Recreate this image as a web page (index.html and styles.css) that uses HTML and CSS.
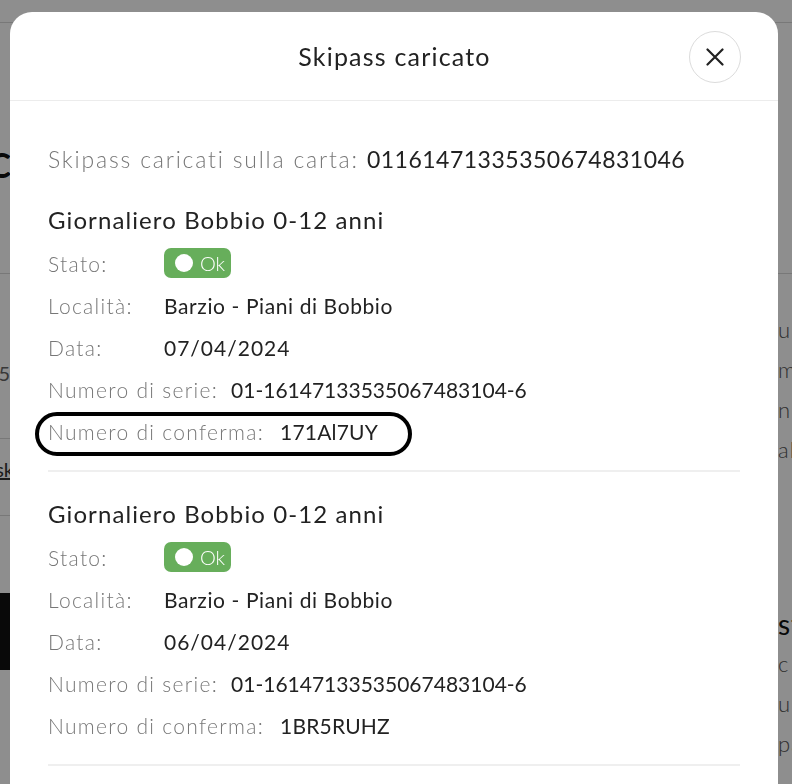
FILE: index.html
```html
<!DOCTYPE html>
<html lang="it">
<head>
<meta charset="utf-8">
<title>Skipass caricato</title>
<link rel="stylesheet" href="styles.css">
</head>
<body>
<div class="page">
  <div class="page-top"></div>
  <div class="band band-1">
    <div class="edge-left"><span class="big">Carta C</span></div>
    <div class="mid"></div>
    <div class="edge-right"></div>
  </div>
  <div class="band band-2">
    <div class="edge-left col">
      <div class="lt num"><span>12345</span></div>
      <div class="lt line-under"></div>
      <div class="lt link"><span>Disk</span></div>
      <div class="lt line-under2"></div>
      <div class="block"></div>
    </div>
    <div class="mid"></div>
    <div class="edge-right col">
      <div class="rt">u</div>
      <div class="rt">m</div>
      <div class="rt">n</div>
      <div class="rt">al</div>
      <div class="rt strong">st</div>
      <div class="rt">c</div>
      <div class="rt">u</div>
      <div class="rt">pa</div>
    </div>
  </div>
</div>

<div class="overlay">
  <div class="modal">
    <div class="modal-header">
      <span></span>
      <h1 class="modal-title">Skipass caricato</h1>
      <button class="close" aria-label="Chiudi">
        <svg width="18" height="18" viewBox="0 0 18 18"><path d="M1.5 1.5 L16.5 16.5 M16.5 1.5 L1.5 16.5" stroke="#222" stroke-width="2.2" stroke-linecap="round" fill="none"/></svg>
      </button>
    </div>
    <div class="modal-body">
      <p class="intro">Skipass caricati sulla carta: <span class="card-no">01161471335350674831046</span></p>

      <section class="pass">
        <h2 class="pass-title">Giornaliero Bobbio 0-12 anni</h2>
        <div class="rows">
          <div class="row"><span class="label">Stato:</span><span class="badge"><span class="dot"></span>Ok</span></div>
          <div class="row"><span class="label">Località:</span><span class="value">Barzio - Piani di Bobbio</span></div>
          <div class="row"><span class="label">Data:</span><span class="value date">07/04/2024</span></div>
          <div class="row"><span class="label">Numero di serie:</span><span class="value serial">01-16147133535067483104-6</span></div>
          <div class="row highlight"><span class="label">Numero di conferma:</span><span class="value code">171Al7UY</span><span class="ring"></span></div>
        </div>
      </section>

      <section class="pass">
        <h2 class="pass-title">Giornaliero Bobbio 0-12 anni</h2>
        <div class="rows">
          <div class="row"><span class="label">Stato:</span><span class="badge"><span class="dot"></span>Ok</span></div>
          <div class="row"><span class="label">Località:</span><span class="value">Barzio - Piani di Bobbio</span></div>
          <div class="row"><span class="label">Data:</span><span class="value date">06/04/2024</span></div>
          <div class="row"><span class="label">Numero di serie:</span><span class="value serial">01-16147133535067483104-6</span></div>
          <div class="row"><span class="label">Numero di conferma:</span><span class="value code">1BR5RUHZ</span></div>
        </div>
      </section>
    </div>
  </div>
</div>
</body>
</html>
```

FILE: styles.css
```css
* { box-sizing: border-box; }

html, body {
  margin: 0;
  height: 784px;
  overflow: hidden;
}

body {
  font-family: Lato, "Open Sans", sans-serif;
  background: #fff;
  color: #222;
}

/* ---------- background page ---------- */
.page {
  height: 784px;
}

.page-top {
  height: 23px;
  border-bottom: 1px solid #d8d8d8;
}

.band {
  display: grid;
  grid-template-columns: 10px 1fr 14px;
}

.band-1 {
  height: 251px;
  border-bottom: 1px solid #d8d8d8;
}

.edge-left, .edge-right {
  overflow: hidden;
  white-space: nowrap;
}

.edge-left {
  display: flex;
  justify-content: flex-end;
  align-items: flex-start;
}

.edge-left.col {
  flex-direction: column;
  justify-content: flex-start;
  align-items: stretch;
}

.edge-right.col {
  display: flex;
  flex-direction: column;
  align-items: flex-start;
}

.big {
  margin-top: 124px;
  font-size: 34px;
  font-weight: 700;
  color: #111;
  line-height: 36px;
  margin-right: -1px;
}

.lt {
  display: flex;
  justify-content: flex-end;
  font-size: 20px;
  color: #666;
  flex: none;
}

.num {
  margin-top: 85px;
  line-height: 28px;
  height: 28px;
}

.line-under {
  height: 52px;
  border-bottom: 1px solid #d8d8d8;
}

.link {
  line-height: 36px;
  height: 77px;
  border-bottom: 1px solid #d8d8d8;
  padding-top: 12px;
}

.link span {
  text-decoration: underline;
  color: #333;
  margin-right: -4px;
}

.line-under2 {
  height: 77px;
}

.block {
  flex: none;
  height: 77px;
  background: #111;
}

.rt {
  font-size: 22px;
  color: #555;
  line-height: 40px;
  font-weight: 300;
  letter-spacing: 1px;
}

.rt:first-child {
  margin-top: 36px;
}

.rt.strong {
  margin-top: 134px;
  font-size: 28px;
  font-weight: 400;
  color: #111;
}

/* ---------- overlay & modal ---------- */
.overlay {
  position: fixed;
  inset: 0;
  background: rgba(0, 0, 0, 0.443);
  padding: 12px 14px 0 10px;
}

.modal {
  background: #fff;
  border-radius: 22px 22px 0 0;
  height: 100%;
  overflow: hidden;
}

.modal-header {
  height: 89px;
  display: grid;
  grid-template-columns: 52px 1fr 52px;
  align-items: center;
  padding: 0 37px 0 38px;
  border-bottom: 1px solid #ececec;
}

.modal-title {
  margin: 0;
  text-align: center;
  font-size: 25px;
  font-weight: 400;
  color: #222;
  letter-spacing: 1.2px;
}

.close {
  width: 52px;
  height: 52px;
  border-radius: 50%;
  border: 1px solid #dcdcdc;
  background: #fff;
  display: grid;
  place-items: center;
  padding: 0;
  margin-top: 1px;
}

.close svg { display: block; }

.modal-body {
  padding: 43px 38px 0;
}

.intro {
  margin: 0 0 4px;
  font-size: 23px;
  line-height: 30px;
  color: #777;
  font-weight: 300;
  letter-spacing: 1.8px;
  white-space: nowrap;
}

.card-no {
  color: #222;
  font-weight: 400;
  letter-spacing: 0.5px;
}

.pass {
  padding: 27px 0 24px;
  border-bottom: 2px solid #efefef;
}

.pass-title {
  margin: 0 0 13px;
  font-size: 24px;
  line-height: 30px;
  font-weight: 400;
  color: #222;
  letter-spacing: 1.1px;
}

.rows {
  display: flex;
  flex-direction: column;
  gap: 12px;
}

.row {
  display: flex;
  align-items: center;
  height: 30px;
  font-size: 21px;
}

.label {
  color: #777;
  font-weight: 300;
  min-width: 103px;
  margin-right: 13px;
  letter-spacing: 1.3px;
  white-space: nowrap;
}

.value {
  color: #222;
  letter-spacing: 0.6px;
  white-space: nowrap;
}

.value.date { letter-spacing: 1px; }
.value.serial { letter-spacing: 0; }
.value.code { letter-spacing: 0.2px; margin-left: 3px; }

.badge {
  display: inline-flex;
  align-items: center;
  gap: 7px;
  height: 30px;
  padding: 0 6px 0 11px;
  border-radius: 7px;
  background: #67ae5b;
  color: #fff;
  font-size: 20px;
  font-weight: 300;
}

.dot {
  width: 18px;
  height: 18px;
  border-radius: 50%;
  background: #fff;
}

.highlight {
  position: relative;
}

.ring {
  position: absolute;
  left: -13px;
  top: -4px;
  width: 377px;
  height: 44px;
  border: 4px solid #000;
  border-radius: 22px;
}
```
